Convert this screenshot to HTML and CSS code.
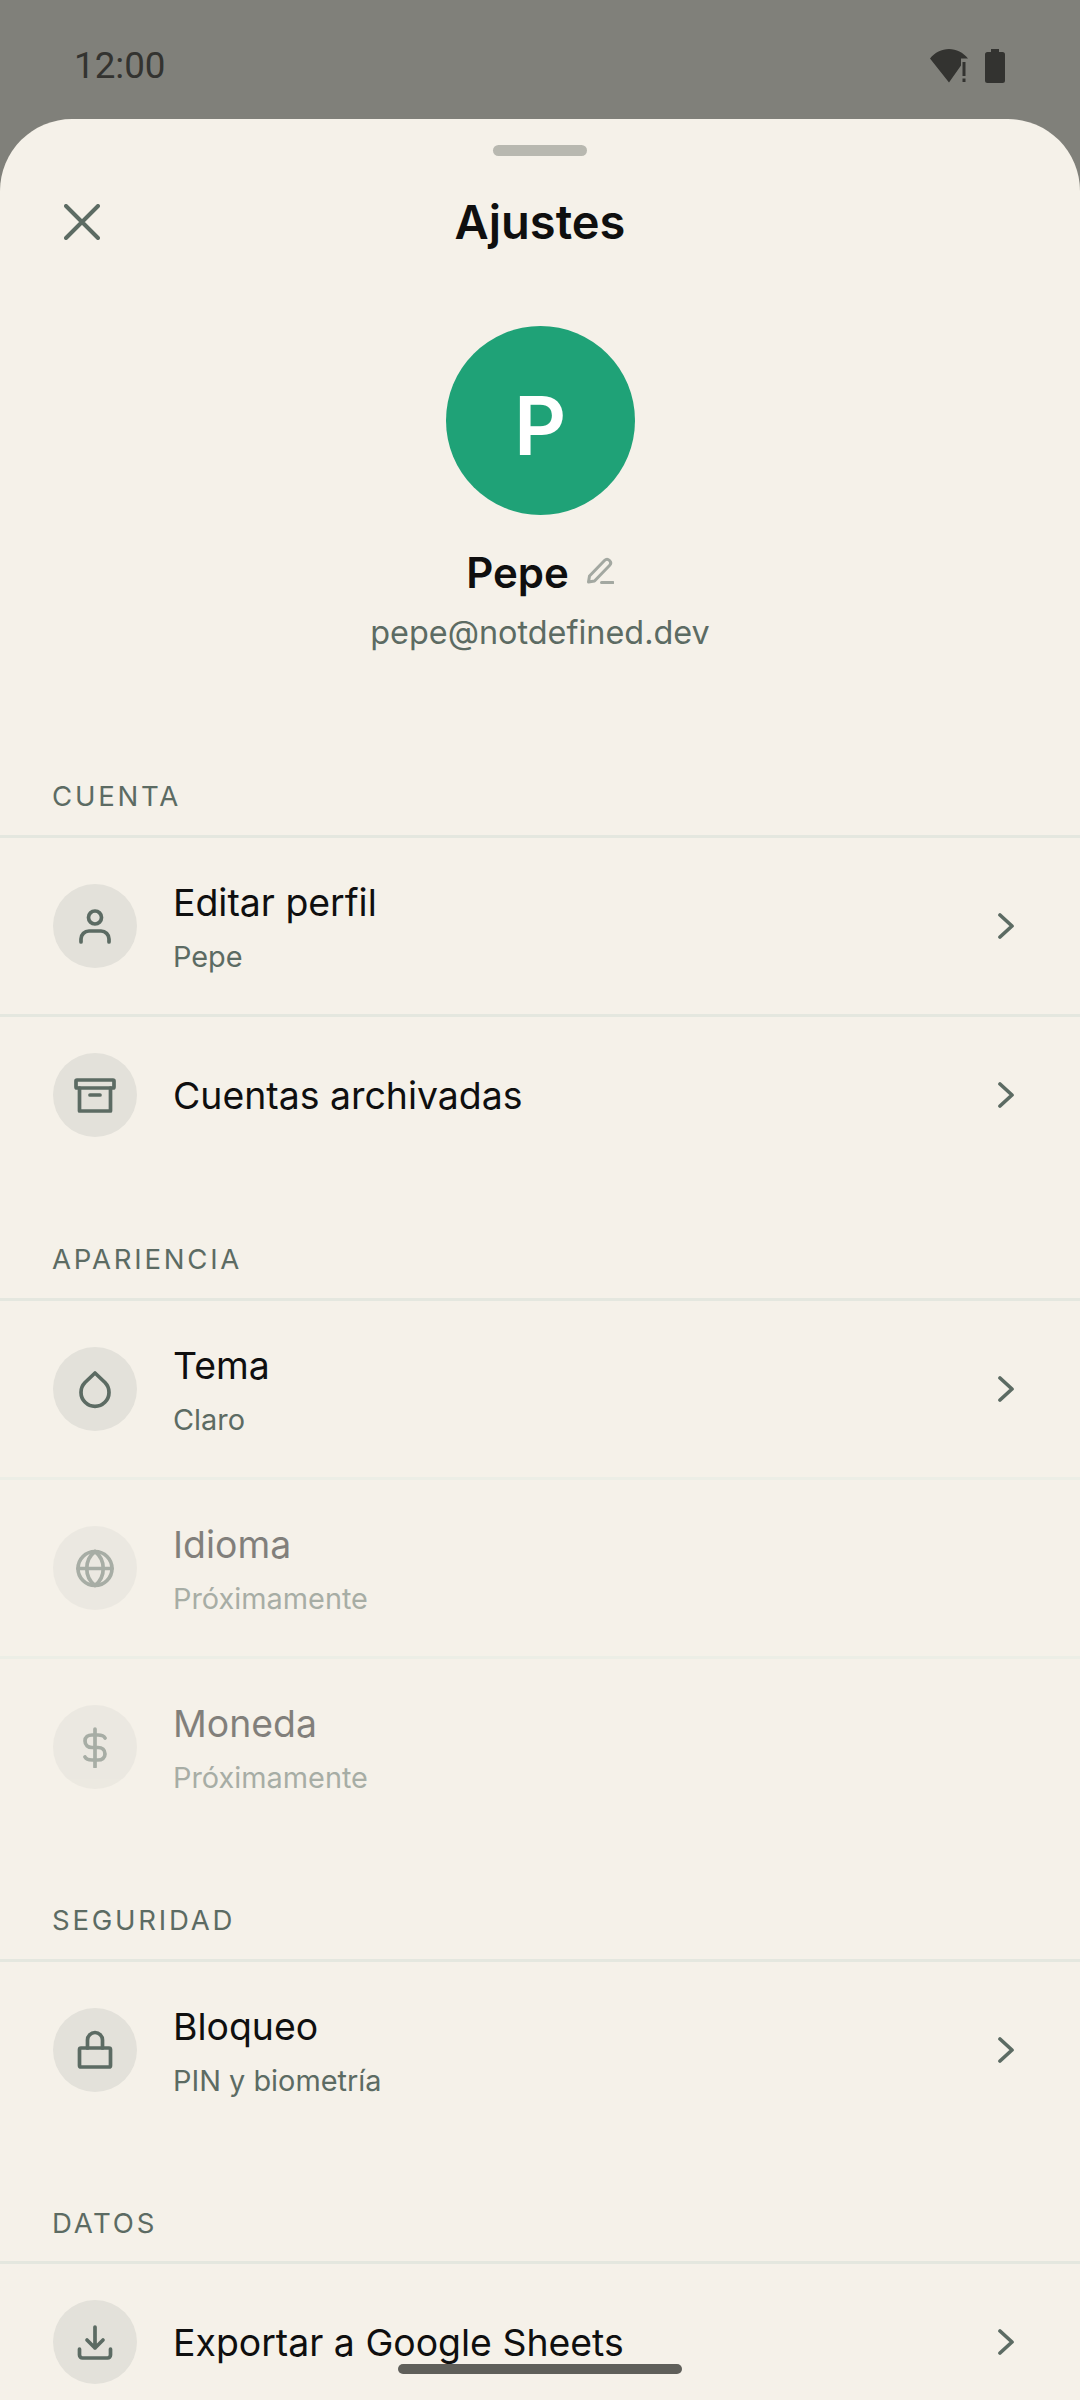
FILE: index.html
```html
<!DOCTYPE html>
<html lang="es">
<head>
<meta charset="utf-8">
<title>Ajustes</title>
<link rel="stylesheet" href="styles.css">
</head>
<body>
<div class="phone">
  <header class="status">
    <span class="clock">12:00</span>
    <div class="status-icons">
      <svg class="wifi" viewBox="0 0 38 34" width="38" height="34"><path d="M0 9.500 C5 3.500 11.500 0 19 0 C26.500 0 33 3.500 38 9.500 L31 9.500 L31 16.500 L19 33.500 Z" fill="#333330"/><rect x="32.500" y="13" width="3" height="14" fill="#333330"/><rect x="32.500" y="29.500" width="3" height="3.500" fill="#333330"/></svg>
      <svg class="batt" viewBox="0 0 20 34" width="20" height="34"><path d="M6 0 H14 V3 H17.500 A2.500 2.500 0 0 1 20 5.500 V31.500 A2.500 2.500 0 0 1 17.500 34 H2.500 A2.500 2.500 0 0 1 0 31.500 V5.500 A2.500 2.500 0 0 1 2.500 3 H6 Z" fill="#333330"/></svg>
    </div>
  </header>

  <main class="sheet">
    <div class="handle"></div>
    <div class="topbar">
      <svg class="close" viewBox="0 0 36 36" width="36" height="36"><path d="M2 2 L34 34 M34 2 L2 34" class="stroke-x"/></svg>
      <h1 class="title">Ajustes</h1>
    </div>

    <section class="profile">
      <div class="avatar">P</div>
      <div class="name-row">
        <span class="name">Pepe</span>
        <svg class="pencil" viewBox="0 0 28 28" width="28" height="28"><path d="M2.500 25 L3.500 19 L18.500 3.500 C20 2 22 2 23.500 3.500 C25 5 25 7 23.500 8.500 L8.500 24 Z M15.500 25.500 H27" class="stroke-pencil"/></svg>
      </div>
      <div class="email">pepe@notdefined.dev</div>
    </section>

    <section class="group first">
      <h2 class="label">CUENTA</h2>
      <div class="row tall">
        <div class="badge"><svg viewBox="0 0 42 42" width="42" height="42"><circle cx="21" cy="12.500" r="6.500" class="ico"/><path d="M7 37 V34 A8 8 0 0 1 15 26 H27 A8 8 0 0 1 35 34 V37" class="ico"/></svg></div>
        <div class="text"><div class="t">Editar perfil</div><div class="s">Pepe</div></div>
        <svg class="chev" viewBox="0 0 16 26" width="16" height="26"><path d="M2 2 L14 13 L2 24" class="ico"/></svg>
      </div>
      <div class="row short">
        <div class="badge"><svg viewBox="0 0 42 42" width="42" height="42"><rect x="2" y="6" width="38" height="8" rx="1" class="ico"/><path d="M5.500 14 V37 H36.500 V14 M16 21 H26" class="ico"/></svg></div>
        <div class="text"><div class="t">Cuentas archivadas</div></div>
        <svg class="chev" viewBox="0 0 16 26" width="16" height="26"><path d="M2 2 L14 13 L2 24" class="ico"/></svg>
      </div>
    </section>

    <section class="group">
      <h2 class="label">APARIENCIA</h2>
      <div class="row tall soft">
        <div class="badge"><svg viewBox="0 0 42 42" width="42" height="42"><path d="M21 5 L31 14.500 A14 14 0 1 1 11 14.500 Z" class="ico"/></svg></div>
        <div class="text"><div class="t">Tema</div><div class="s">Claro</div></div>
        <svg class="chev" viewBox="0 0 16 26" width="16" height="26"><path d="M2 2 L14 13 L2 24" class="ico"/></svg>
      </div>
      <div class="row tall soft off">
        <div class="badge"><svg viewBox="0 0 42 42" width="42" height="42"><circle cx="21" cy="21.500" r="17" class="ico"/><path d="M4 21.500 H38 M21 4.500 C10 13 10 30 21 38.500 C32 30 32 13 21 4.500" class="ico"/></svg></div>
        <div class="text"><div class="t">Idioma</div><div class="s">Próximamente</div></div>
      </div>
      <div class="row tall off">
        <div class="badge"><svg viewBox="0 0 42 42" width="42" height="42"><path d="M21 3 V41 M31 12 C30 10 27 9 24 9 H18 C14 9 11 11 11 15 C11 19 14 21.500 18 21.500 H24 C28 21.500 31 24 31 28 C31 32 28 34 24 34 H18 C15 34 12 33 11 31" class="ico"/></svg></div>
        <div class="text"><div class="t">Moneda</div><div class="s">Próximamente</div></div>
      </div>
    </section>

    <section class="group">
      <h2 class="label">SEGURIDAD</h2>
      <div class="row tall">
        <div class="badge"><svg viewBox="0 0 42 42" width="42" height="42"><rect x="5.500" y="19" width="31" height="19" rx="1.500" class="ico"/><path d="M13.500 19 V11 A7.500 7.500 0 0 1 28.500 11 V19" class="ico"/></svg></div>
        <div class="text"><div class="t">Bloqueo</div><div class="s">PIN y biometría</div></div>
        <svg class="chev" viewBox="0 0 16 26" width="16" height="26"><path d="M2 2 L14 13 L2 24" class="ico"/></svg>
      </div>
    </section>

    <section class="group">
      <h2 class="label">DATOS</h2>
      <div class="row short">
        <div class="badge"><svg viewBox="0 0 42 42" width="42" height="42"><path d="M21 6 V27 M13 19 L21 27 L29 19 M5.500 28 V34 A3 3 0 0 0 8.500 37 H33.500 A3 3 0 0 0 36.500 34 V28" class="ico"/></svg></div>
        <div class="text"><div class="t">Exportar a Google Sheets</div></div>
        <svg class="chev" viewBox="0 0 16 26" width="16" height="26"><path d="M2 2 L14 13 L2 24" class="ico"/></svg>
      </div>
    </section>
  </main>

  <div class="home-bar"></div>
</div>
</body>
</html>
```
FILE: styles.css
```css
* { box-sizing: border-box; }
html, body { margin: 0; padding: 0; }
body { width: 1080px; height: 2400px; overflow: hidden; background: #80807a; font-family: Inter, "Noto Sans", sans-serif; }
.phone { position: relative; width: 1080px; height: 2400px; overflow: hidden; display: flex; flex-direction: column; }

.status { height: 119px; flex: none; display: flex; justify-content: space-between; align-items: flex-start; padding: 46px 75px 0 74px; background: #80807a; }
.clock { font-family: Roboto, sans-serif; font-size: 36.750px; line-height: 40px; color: #333330; }
.status-icons { display: flex; gap: 17px; margin-top: 3px; }

.sheet { flex: 1; background: #f5f1e9; border-radius: 72px 72px 0 0; overflow: hidden; display: flex; flex-direction: column; }
.handle { align-self: center; flex: none; width: 94px; height: 11px; margin-top: 26px; border-radius: 6px; background: #b8b8b0; }
.topbar { position: relative; flex: none; height: 60px; margin-top: 36px; display: flex; align-items: center; justify-content: center; }
.close { position: absolute; left: 64px; top: 12px; }
.stroke-x { fill: none; stroke: #5c6b63; stroke-width: 4; stroke-linecap: round; }
.title { margin: 0; font-size: 47px; line-height: 60px; font-weight: 600; color: #0f0f0f; }

.profile { flex: none; display: flex; flex-direction: column; align-items: center; margin-top: 74px; }
.avatar { width: 189px; height: 189px; padding-top: 10px; border-radius: 50%; background: #1fa277; color: #fff; font-size: 81px; font-weight: 600; display: flex; align-items: center; justify-content: center; }
.name-row { position: relative; display: flex; align-items: center; gap: 17px; margin-top: 32px; height: 52px; }
.name { font-size: 42px; line-height: 52px; font-weight: 600; color: #0f0f0f; }
.pencil { margin-top: -4px; }
.stroke-pencil { fill: none; stroke: #a3a8a1; stroke-width: 3; stroke-linecap: round; stroke-linejoin: round; }
.email { margin-top: 12px; font-size: 32.400px; line-height: 44px; color: #5c6b63; }

.group { flex: none; padding-top: 68px; }
.group.first { padding-top: 124px; }
.label { margin: 0; padding: 0 52px; height: 56px; font-size: 27.560px; line-height: 34px; font-weight: 400; letter-spacing: 0.1em; color: #5c6b63; }
.group:last-of-type .label { height: 55px; }

.row { display: flex; align-items: center; padding: 0 60px 0 53px; border-top: 3px solid #e4e7df; }
.row.tall { height: 179px; }
.row.short { height: 160px; padding-bottom: 2px; }
.row.soft + .row { border-top-color: #eceee6; }
.off > * { opacity: .5; }
.badge { flex: none; width: 84px; height: 84px; border-radius: 50%; background: #e3e1da; display: flex; align-items: center; justify-content: center; }
.ico { fill: none; stroke: #5c6b63; stroke-width: 3.700; stroke-linecap: round; stroke-linejoin: round; }
.text { flex: 1; margin-left: 36px; margin-top: 2px; }
.t { font-size: 37.400px; line-height: 50px; color: #0f0f0f; }
.s { margin-top: 9px; font-size: 28.880px; line-height: 40px; color: #5c6b63; }
.chev { flex: none; margin-right: 6px; }

.home-bar { position: absolute; left: 398px; top: 2364px; width: 284px; height: 10px; border-radius: 5px; background: #5f5f5a; }
```
